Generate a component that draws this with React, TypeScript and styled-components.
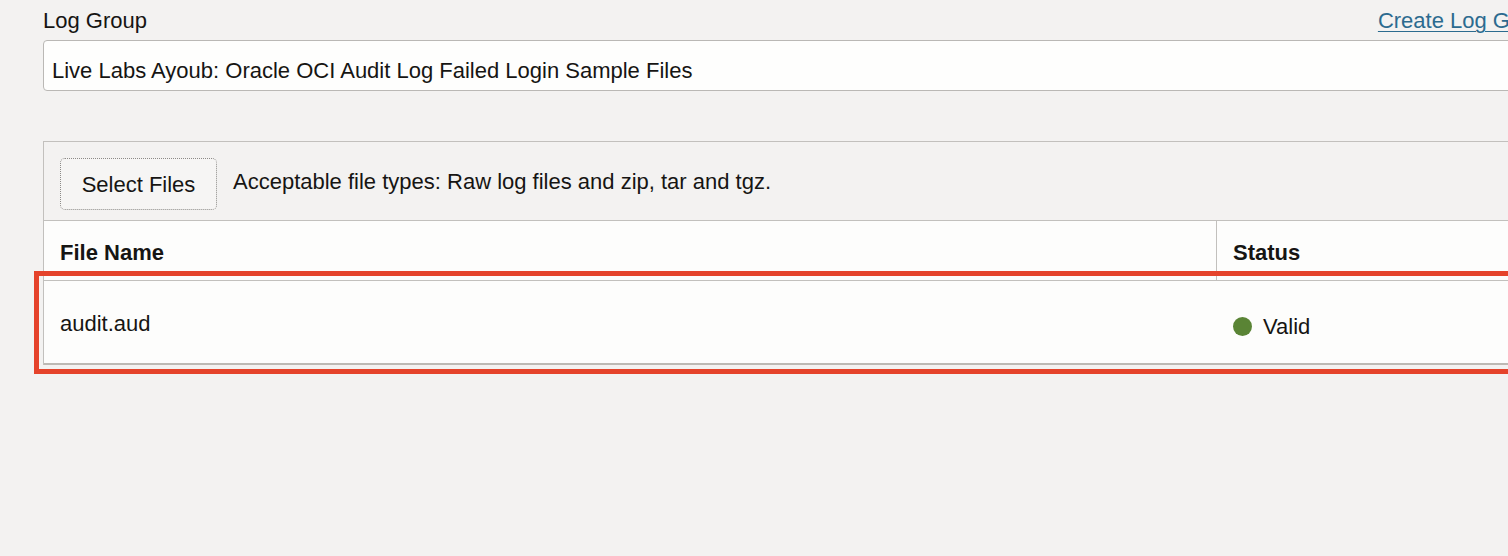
import React from "react";
import styled, { createGlobalStyle } from "styled-components";

const Global = createGlobalStyle`
  html { overflow: hidden; background: #f3f2f1; }
  html, body { margin: 0; padding: 0; }
  body { font-family: "Liberation Sans", Arial, sans-serif; color: #161513; background: #f3f2f1; }
`;

const Page = styled.div`
  width: 1511px;
  padding: 6px 0 20px 43px;
  display: flex;
  flex-direction: column;
`;

const LabelRow = styled.div`
  display: flex;
  justify-content: space-between;
  align-items: baseline;
  height: 34px;
  font-size: 22px;
  line-height: 30px;
`;

const Label = styled.span`
  color: #161513;
`;

const Link = styled.a`
  color: #2c6b8f;
  text-decoration: underline;
  text-underline-offset: 3px;
  text-decoration-thickness: 1px;
`;

const Input = styled.div`
  box-sizing: border-box;
  height: 51px;
  border: 1px solid #bab8b5;
  border-radius: 4px;
  background: #fefefd;
  display: flex;
  align-items: center;
  padding: 10px 8px 0;
  font-size: 22px;
  color: #161513;
`;

const Panel = styled.div`
  position: relative;
  margin-top: 50px;
  border: 1px solid #c2c0bd;
  border-bottom: none;
`;

const Toolbar = styled.div`
  display: flex;
  align-items: center;
  gap: 16px;
  padding: 16px 16px 10px;
  border-bottom: 1px solid #c2c0bd;
  font-size: 22px;
`;

const ToolbarText = styled.span`
  margin-top: -4px;
`;

const Button = styled.button`
  box-sizing: border-box;
  width: 157px;
  height: 52px;
  background: #f6f5f4;
  border: 1px dotted #8c8a87;
  border-radius: 5px;
  font-family: inherit;
  font-size: 22px;
  color: #161513;
  padding: 2px 0 0;
`;

const Table = styled.div`
  background: #fdfdfc;
  display: grid;
  grid-template-columns: 1172px 1fr;
`;

const HeadCell = styled.div<{ $divider?: boolean }>`
  height: 60px;
  box-sizing: border-box;
  display: flex;
  align-items: center;
  padding: 4px 16px 0;
  font-weight: 700;
  font-size: 22px;
  border-bottom: 1px solid #c2c0bd;
  border-left: ${(p) => (p.$divider ? "1px solid #c2c0bd" : "none")};
`;

const Cell = styled.div`
  height: 84px;
  box-sizing: border-box;
  display: flex;
  align-items: center;
  gap: 11px;
  padding: 4px 16px 0 16px;
  font-size: 22px;
  border-bottom: 2px solid #bdb9b4;
`;

const StatusCell = styled(Cell)`
  padding-left: 17px;
  padding-top: 10px;
`;

const Dot = styled.span`
  width: 19px;
  height: 19px;
  border-radius: 50%;
  background: #5a8435;
  flex: none;
  margin-top: -2px;
`;

const Highlight = styled.div`
  position: absolute;
  left: -10px;
  top: 129px;
  width: 1600px;
  height: 103px;
  box-sizing: border-box;
  border: 5px solid #e5432b;
  pointer-events: none;
`;

export default function App() {
  return (
    <>
      <Global />
      <Page>
        <LabelRow>
          <Label>Log Group</Label>
          <Link href="#">Create Log Group</Link>
        </LabelRow>
        <Input>Live Labs Ayoub: Oracle OCI Audit Log Failed Login Sample Files</Input>
        <Panel>
          <Toolbar>
            <Button>Select Files</Button>
            <ToolbarText>Acceptable file types: Raw log files and zip, tar and tgz.</ToolbarText>
          </Toolbar>
          <Table>
            <HeadCell>File Name</HeadCell>
            <HeadCell $divider>Status</HeadCell>
            <Cell>audit.aud</Cell>
            <StatusCell>
              <Dot />
              Valid
            </StatusCell>
          </Table>
          <Highlight />
        </Panel>
      </Page>
    </>
  );
}
